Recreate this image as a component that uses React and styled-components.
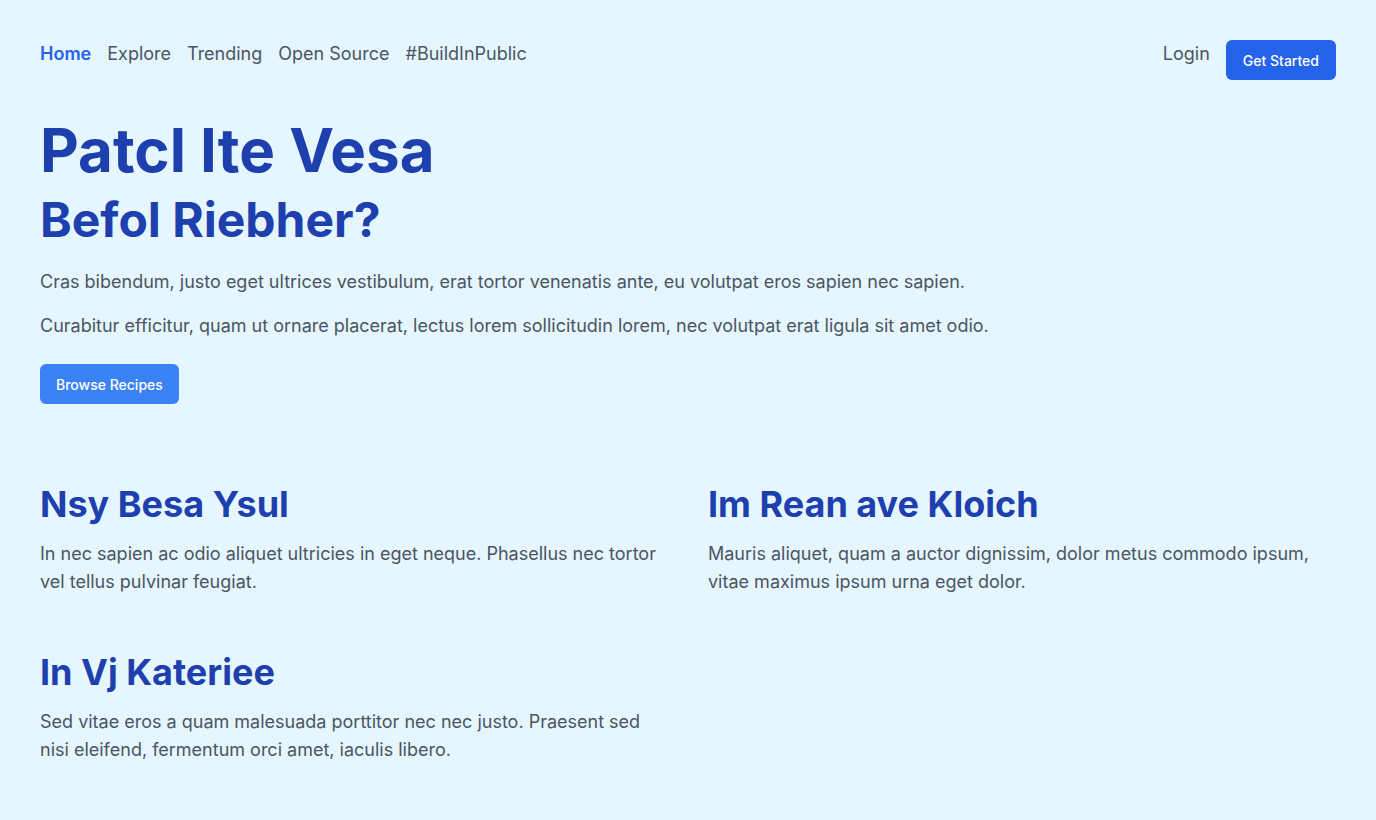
import React from "react"
import styled, { createGlobalStyle } from "styled-components"

const GlobalStyle = createGlobalStyle`
    * {
        box-sizing: border-box;
    }
    body {
        margin: 0;
        background: #e5f6fe;
        font-family: Inter, "Noto Sans", sans-serif;
        -webkit-font-smoothing: antialiased;
    }
`

const navLinks = ["Home", "Explore", "Trending", "Open Source", "#BuildInPublic"]

const features = [
    {
        title: "Nsy Besa Ysul",
        text: "In nec sapien ac odio aliquet ultricies in eget neque. Phasellus nec tortor vel tellus pulvinar feugiat.",
    },
    {
        title: "Im Rean ave Kloich",
        text: "Mauris aliquet, quam a auctor dignissim, dolor metus commodo ipsum, vitae maximus ipsum urna eget dolor.",
    },
    {
        title: "In Vj Kateriee",
        text: "Sed vitae eros a quam malesuada porttitor nec nec justo. Praesent sed nisi eleifend, fermentum orci amet, iaculis libero.",
    },
]

const App = () => {
    return (
        <Page>
            <GlobalStyle />
            <Header>
                <Nav>
                    {navLinks.map((link, index) => (
                        <NavLink href="#" key={link} $active={index === 0}>
                            {link}
                        </NavLink>
                    ))}
                </Nav>
                <Actions>
                    <NavLink href="#">Login</NavLink>
                    <Button $dark>Get Started</Button>
                </Actions>
            </Header>

            <Hero>
                <Title>Patcl Ite Vesa</Title>
                <Subtitle>Befol Riebher?</Subtitle>
                <Lead>Cras bibendum, justo eget ultrices vestibulum, erat tortor venenatis ante, eu volutpat eros sapien nec sapien.</Lead>
                <Lead>Curabitur efficitur, quam ut ornare placerat, lectus lorem sollicitudin lorem, nec volutpat erat ligula sit amet odio.</Lead>
                <HeroButton>Browse Recipes</HeroButton>
            </Hero>

            <FeatureGrid>
                {features.map((feature) => (
                    <Feature key={feature.title}>
                        <FeatureTitle>{feature.title}</FeatureTitle>
                        <FeatureText>{feature.text}</FeatureText>
                    </Feature>
                ))}
            </FeatureGrid>
        </Page>
    )
}

const Page = styled.div`
    min-height: 820px;
    padding: 40px;
`

const Header = styled.header`
    display: flex;
    justify-content: space-between;
    align-items: flex-start;
`

const Nav = styled.nav`
    display: flex;
    gap: 16px;
`

const Actions = styled.div`
    display: flex;
    align-items: flex-start;
    gap: 16px;
`

const NavLink = styled.a`
    font-size: 18px;
    line-height: 28px;
    text-decoration: none;
    color: ${(props) => (props.$active ? "#2563eb" : "#4b5563")};
    font-weight: ${(props) => (props.$active ? 600 : 400)};
`

const Button = styled.button`
    height: 40px;
    padding: 0 ${(props) => (props.$dark ? "17px" : "16px")};
    border: none;
    border-radius: 6px;
    background: ${(props) => (props.$dark ? "#2563eb" : "#3b82f6")};
    color: #ffffff;
    font-family: inherit;
    font-size: 14px;
    font-weight: 500;
    cursor: pointer;
`

const HeroButton = styled(Button)`
    margin-top: 8px;
`

const Hero = styled.section`
    margin-top: 40px;
`

const Title = styled.h1`
    margin: 0;
    color: #1e40af;
    font-size: 60px;
    line-height: 1;
    font-weight: 700;
`

const Subtitle = styled.h2`
    margin: 16px 0 24px;
    color: #1e40af;
    font-size: 48px;
    line-height: 1;
    font-weight: 700;
`

const Lead = styled.p`
    margin: 0 0 16px;
    color: #4b5563;
    font-size: 18px;
    line-height: 28px;
`

const FeatureGrid = styled.div`
    display: grid;
    grid-template-columns: 1fr 1fr;
    column-gap: 40px;
    row-gap: 56px;
    margin-top: 80px;
`

const Feature = styled.div``

const FeatureTitle = styled.h3`
    margin: 0 0 16px;
    color: #1e40af;
    font-size: 36px;
    line-height: 40px;
    font-weight: 700;
`

const FeatureText = styled.p`
    margin: 0;
    color: #4b5563;
    font-size: 18px;
    line-height: 28px;
`

export default App
